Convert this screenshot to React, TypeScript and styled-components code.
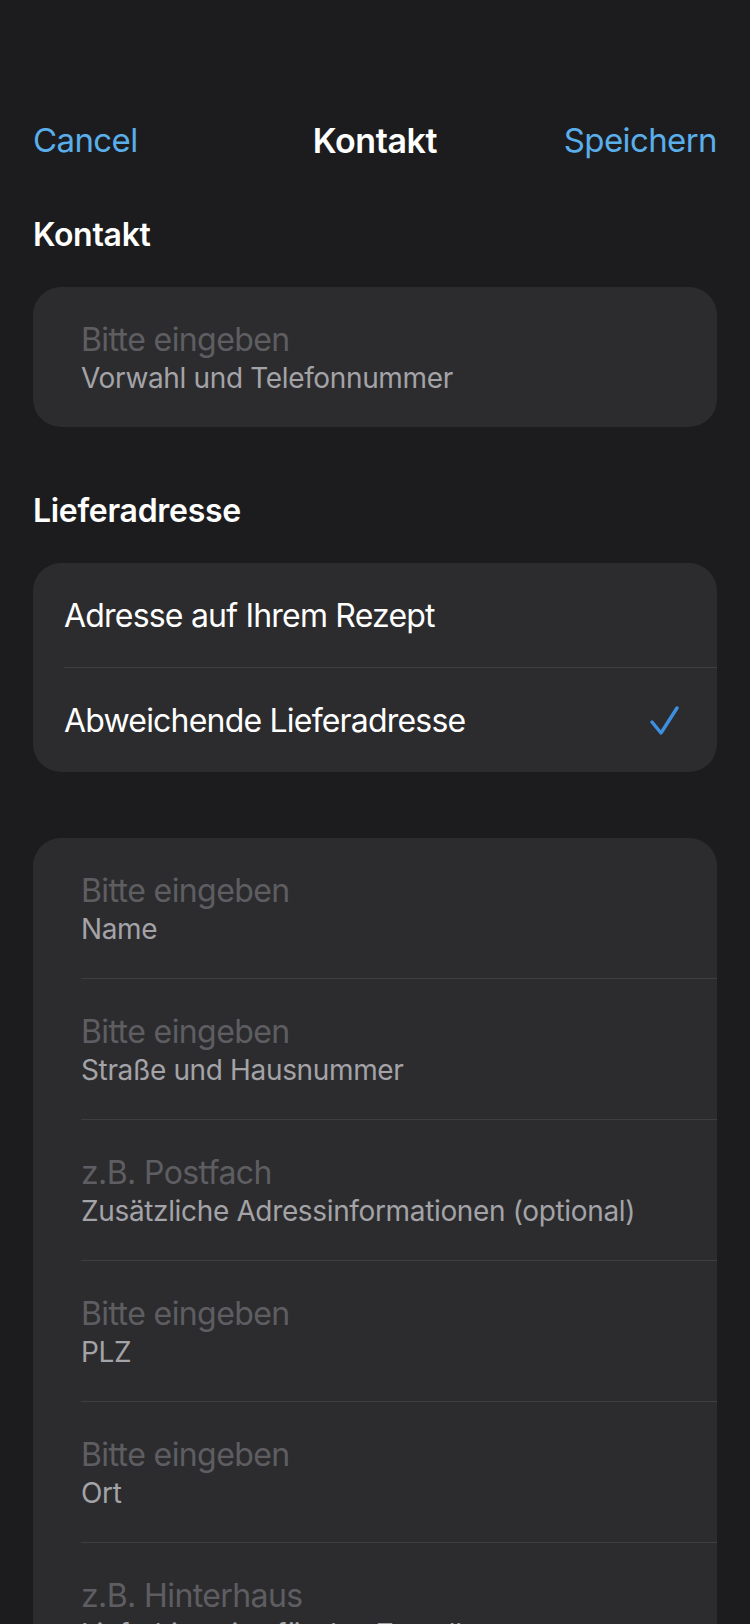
import React from "react";
import styled, { createGlobalStyle } from "styled-components";

const Global = createGlobalStyle`
  html, body {
    margin: 0;
    padding: 0;
    background: #1c1c1e;
  }
  body {
    font-family: Inter, "Noto Sans", "Liberation Sans", sans-serif;
    -webkit-font-smoothing: antialiased;
  }
`;

const Screen = styled.div`
  width: 750px;
  height: 1624px;
  overflow: hidden;
  background: #1c1c1e;
  padding: 96px 33px 0;
  box-sizing: border-box;
`;

const NavBar = styled.div`
  height: 88px;
  display: grid;
  grid-template-columns: 1fr auto 1fr;
  align-items: center;
`;

const NavButton = styled.button<{ $align: "left" | "right" }>`
  background: none;
  border: 0;
  padding: 0;
  font-family: inherit;
  font-size: 33px;
  letter-spacing: -0.6px;
  color: #5aaeea;
  justify-self: ${(p) => (p.$align === "left" ? "start" : "end")};
  cursor: pointer;
`;

const NavTitle = styled.div`
  font-size: 34px;
  font-weight: 600;
  letter-spacing: -0.4px;
  color: #ffffff;
`;

const SectionHeader = styled.h2<{ $top: number }>`
  margin: ${(p) => p.$top}px 0 32px;
  font-size: 32px;
  line-height: 40px;
  font-weight: 600;
  letter-spacing: -0.3px;
  color: #ffffff;
`;

const Card = styled.div<{ $top?: number }>`
  margin-top: ${(p) => p.$top ?? 0}px;
  background: #2c2c2e;
  border-radius: 28px;
  overflow: hidden;
`;

const FieldRow = styled.div<{ $divider?: boolean }>`
  margin-left: 48px;
  padding: 33px 0 31px;
  display: flex;
  flex-direction: column;
  border-bottom: ${(p) => (p.$divider ? "1px solid #3e3e41" : "none")};
`;

const Placeholder = styled.div`
  font-size: 32px;
  line-height: 40px;
  letter-spacing: -0.6px;
  color: #5e5e62;
`;

const FieldLabel = styled.div`
  font-size: 28px;
  line-height: 36px;
  letter-spacing: -0.35px;
  color: #a3a3a8;
`;

const OptionRow = styled.div<{ $divider?: boolean }>`
  margin-left: 31px;
  padding-right: 38px;
  height: 104px;
  display: flex;
  align-items: center;
  justify-content: space-between;
  border-top: ${(p) => (p.$divider ? "1px solid #3e3e41" : "none")};
`;

const OptionText = styled.div`
  font-size: 32px;
  letter-spacing: -0.8px;
  color: #ffffff;
`;

const Check = () => (
  <svg width="30" height="30" viewBox="0 0 30 30" fill="none">
    <path
      d="M3 17 L12 28 L28 3"
      stroke="#3d8fe0"
      strokeWidth="3.4"
      strokeLinecap="round"
      strokeLinejoin="round"
    />
  </svg>
);

const addressFields = [
  { placeholder: "Bitte eingeben", label: "Name" },
  { placeholder: "Bitte eingeben", label: "Straße und Hausnummer" },
  { placeholder: "z.B. Postfach", label: "Zusätzliche Adressinformationen (optional)" },
  { placeholder: "Bitte eingeben", label: "PLZ" },
  { placeholder: "Bitte eingeben", label: "Ort" },
  { placeholder: "z.B. Hinterhaus", label: "Lieferhinweise für den Zusteller" },
];

export default function App() {
  return (
    <>
      <Global />
      <Screen>
        <NavBar>
          <NavButton $align="left">Cancel</NavButton>
          <NavTitle>Kontakt</NavTitle>
          <NavButton $align="right">Speichern</NavButton>
        </NavBar>

        <SectionHeader $top={31}>Kontakt</SectionHeader>
        <Card>
          <FieldRow>
            <Placeholder>Bitte eingeben</Placeholder>
            <FieldLabel>Vorwahl und Telefonnummer</FieldLabel>
          </FieldRow>
        </Card>

        <SectionHeader $top={64}>Lieferadresse</SectionHeader>
        <Card>
          <OptionRow>
            <OptionText>Adresse auf Ihrem Rezept</OptionText>
          </OptionRow>
          <OptionRow $divider>
            <OptionText>Abweichende Lieferadresse</OptionText>
            <Check />
          </OptionRow>
        </Card>

        <Card $top={66}>
          {addressFields.map((f, i) => (
            <FieldRow key={i} $divider={i < addressFields.length - 1}>
              <Placeholder>{f.placeholder}</Placeholder>
              <FieldLabel>{f.label}</FieldLabel>
            </FieldRow>
          ))}
        </Card>
      </Screen>
    </>
  );
}
